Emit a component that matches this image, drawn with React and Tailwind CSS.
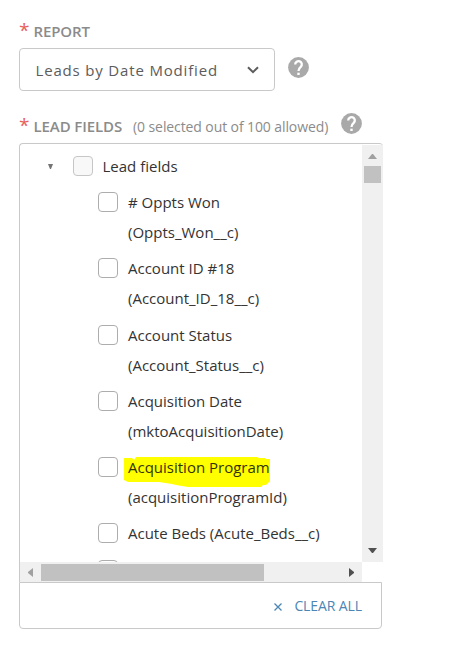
const FONT = "font-['Open_Sans','Noto_Sans',sans-serif]";

const FIELDS = [
  { name: '# Oppts Won', api: '(Oppts_Won__c)', height: 'h-[66px]' },
  { name: 'Account ID #18', api: '(Account_ID_18__c)', height: 'h-[67px]' },
  { name: 'Account Status', api: '(Account_Status__c)', height: 'h-[66px]' },
  { name: 'Acquisition Date', api: '(mktoAcquisitionDate)', height: 'h-[66px]' },
  { name: 'Acquisition Program', api: '(acquisitionProgramId)', height: 'h-[66px]', marked: true },
  { name: 'Acute Beds (Acute_Beds__c)', height: 'h-[37px]' },
  { name: '', height: 'h-[36px]' },
];

function Help({ className }) {
  return (
    <svg className={`h-[21px] w-[21px] shrink-0 ${className}`} viewBox="0 0 21 21">
      <circle cx="10.5" cy="10.5" r="10.4" fill="#a9a9a9" />
      <path d="M7.2 7.4a3.3 3.3 0 1 1 5.6 2.4c-1.2 1.1-2.3 1.8-2.3 4.3" fill="none" stroke="#fff" strokeWidth="2.3" />
      <rect x="9.3" y="15.7" width="2.4" height="2.3" fill="#fff" />
    </svg>
  );
}

function Label({ children }) {
  return (
    <span className="flex h-5 items-center whitespace-nowrap">
      <span className="mb-[3px] w-[14.5px] shrink-0 text-[19px] leading-5 text-[#e8605a]">*</span>
      <span className="text-[15px] font-semibold tracking-[-0.1px] text-[#8b8b8b]">{children}</span>
    </span>
  );
}

function Checkbox({ muted }) {
  return (
    <span
      className={`mt-2 h-5 w-5 shrink-0 rounded-[4px] border ${
        muted ? 'border-[#c6c6c6] bg-[#f8f8f8]' : 'border-[#adadad] bg-white'
      }`}
    />
  );
}

function Marker() {
  return (
    <svg className="absolute -left-1 top-[5px] h-[30px] w-[146px]" viewBox="0 0 146 30">
      <path
        d="M0 1H8L10 3L12 0H133L135 1L141 1V2H146V24L143 27L142 28H139L137 30H64L52 28L48 27L35 25H4L0 23Z"
        fill="#ff0"
      />
    </svg>
  );
}

export default function App() {
  return (
    <div className={`h-[649px] w-[461px] overflow-hidden bg-white pl-[19px] pt-[21px] ${FONT}`}>
      <Label>REPORT</Label>

      <div className="mt-[7px] flex">
        <div className="flex h-[43px] w-[256px] items-center justify-between rounded-[4px] border border-[#c9c9c9] pl-[15.5px] pr-[15px]">
          <span className="pt-px text-[15px] font-medium tracking-[0.83px] text-[#5c5c5c]">Leads by Date Modified</span>
          <svg className="h-[8px] w-[12px]" viewBox="0 0 12 8">
            <path d="M1 1.2L6 6.2L11 1.2" fill="none" stroke="#5c5c5c" strokeWidth="2" />
          </svg>
        </div>
        <Help className="ml-[13px] mt-[9px]" />
      </div>

      <div className="mt-[22px] flex h-[30px]">
        <div className="mt-[3px] flex h-5 w-[309px] items-center">
          <Label>LEAD FIELDS</Label>
          <span className="ml-[11px] whitespace-nowrap text-[14px] tracking-[-0.1px] text-[#8b8b8b]">
            (0 selected out of 100 allowed)
          </span>
        </div>
        <Help className="ml-[13px]" />
      </div>

      <div className="h-[486px] w-[364px]">
        <div className="flex h-[419px] rounded-t-[4px] border-l border-t border-[#c9c9c9]">
          <div className="h-[418px] w-[342px] overflow-hidden pt-1">
            <div className="flex h-9 items-start">
              <svg className="ml-[28px] mt-[16px] h-[5px] w-[5px]" viewBox="0 0 5 5">
                <path d="M0 0H5L3 5H2Z" fill="#747474" />
              </svg>
              <span className="w-5 shrink-0" />
              <Checkbox muted />
              <span className="ml-[9.5px] mt-[3px] text-[15px] leading-[30px] text-[#333]">Lead fields</span>
            </div>
            {FIELDS.map((field, i) => (
              <div key={i} className={`flex items-start pl-[78px] ${field.height}`}>
                <Checkbox />
                <div className="ml-[10px] mt-[3px] whitespace-nowrap text-[15px] leading-[30px] text-[#333]">
                  <div className="relative">
                    {field.marked && <Marker />}
                    <span className={field.marked ? 'relative text-[#333300]' : ''}>{field.name}</span>
                  </div>
                  {field.api && <div className="relative">{field.api}</div>}
                </div>
              </div>
            ))}
          </div>
          <div className="mt-px flex w-[21px] shrink-0 flex-col items-center bg-[#f0f0f0]">
            <svg className="mt-[9px] h-[5px] w-[9px]" viewBox="0 0 9 5">
              <path d="M0 5L4 0H5L9 5Z" fill="#a0a0a0" />
            </svg>
            <span className="mt-[7px] h-[17px] w-[17px] bg-[#c1c1c1]" />
            <svg className="mb-[9px] mt-auto h-[5px] w-[9px]" viewBox="0 0 9 5">
              <path d="M0 0H9L5 5H4Z" fill="#505050" />
            </svg>
          </div>
        </div>
        <div className="flex h-5 w-[343px] items-center border-l border-[#c9c9c9] bg-[#f0f0f0]">
          <svg className="ml-2 h-[9px] w-[5px]" viewBox="0 0 5 9">
            <path d="M5 0V9L0 5V4Z" fill="#a0a0a0" />
          </svg>
          <span className="ml-2 h-[17px] w-[223px] bg-[#c1c1c1]" />
          <svg className="ml-auto mr-2 h-[9px] w-[5px]" viewBox="0 0 5 9">
            <path d="M0 0V9L5 5V4Z" fill="#505050" />
          </svg>
        </div>
        <div className="flex h-[47px] w-[363px] items-center justify-end rounded-b-[4px] border border-[#c9c9c9] pr-[19px] text-[14px] text-[#4b86b4]">
          <svg className="mr-[12px] mt-0.5 h-[8px] w-[8px]" viewBox="0 0 8 8">
            <path d="M.5 .5L7.5 7.5M7.5 .5L.5 7.5" stroke="#4b86b4" strokeWidth="1.3" />
          </svg>
          <span className="tracking-[-0.1px]">CLEAR ALL</span>
        </div>
      </div>
    </div>
  );
}
